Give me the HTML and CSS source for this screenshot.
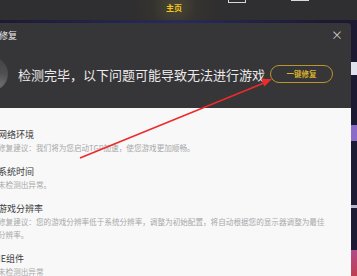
FILE: index.html
```html
<!DOCTYPE html>
<html lang="zh-CN">
<head>
    <meta charset="UTF-8">
    <title>一键修复</title>
    <link rel="stylesheet" href="styles.css">
</head>
<body>
    <div id="page">
        <div class="topbar">
            <span class="nav-home">主页</span>
            <span class="win-box box1"></span>
            <span class="win-box box2"></span>
        </div>
        <div class="stage">
            <div class="dialog">
                <div class="dlg-head">
                    <span class="dlg-title">一键修复</span>
                    <span class="dlg-close">&times;</span>
                </div>
                <div class="summary">
                    <span class="sum-icon"></span>
                    <span class="sum-text">检测完毕，以下问题可能导致无法进行游戏</span>
                    <span class="fix-btn">一键修复</span>
                </div>
                <ul class="result-list">
                    <li>
                        <h3>网络环境</h3>
                        <p>修复建议：我们将为您启动TGP加速，使您游戏更加顺畅。</p>
                    </li>
                    <li>
                        <h3>系统时间</h3>
                        <p>未检测出异常。</p>
                    </li>
                    <li>
                        <h3>游戏分辨率</h3>
                        <p>修复建议：您的游戏分辨率低于系统分辨率，调整为初始配置，将自动根据您的显示器调整为最佳分辨率。</p>
                    </li>
                    <li>
                        <h3>IE组件</h3>
                        <p>未检测出异常</p>
                    </li>
                </ul>
            </div>
            <div class="side">
                <span class="side-a"></span>
                <span class="side-b"></span>
                <span class="side-c"></span>
                <span class="side-d"></span>
            </div>
        </div>
        <!-- 标注箭头 -->
        <svg class="arrow" width="357" height="276" viewBox="0 0 357 276">
            <line x1="80" y1="158" x2="264" y2="83" stroke="#ec2b2b" stroke-width="1.6"/>
            <polygon points="272,79 264.3,86.5 261.2,79.1" fill="#ec2b2b"/>
        </svg>
    </div>
</body>
</html>
```

FILE: styles.css
```css
*{
    margin:0;
    padding:0;
}
li{
    list-style: none;
}
body{
    background: #2f2e30;
    font-family: "Noto Sans CJK SC", "Noto Sans", sans-serif;
}
#page{
    position: relative;
    width: 357px;
    height: 276px;
    overflow: hidden;
    background: #2f2e30;
}
.topbar{
    height: 20px;
    display: flex;
    align-items: flex-start;
    background: radial-gradient(circle at 175px 6px, #4a4634 0, #35332f 22px, #2f2e30 45px);
}
.nav-home{
    margin-left: 166px;
    margin-top: 3px;
    font-size: 8px;
    line-height: 10px;
    font-weight: bold;
    color: #f2c51a;
}
.win-box{
    display: block;
    height: 2px;
    border: 1px solid #d8d8d8;
    border-top: none;
}
.box1{
    width: 16px;
    margin-left: 46px;
}
.box2{
    width: 16px;
    height: 0;
    margin-left: 45px;
}
.stage{
    display: flex;
    height: 256px;
    padding-top: 3px;
    background: linear-gradient(90deg, #1c1a33, #2a2a5a 50%, #1c1a33 90%);
}
.dialog{
    width: 351px;
    background: #363537;
    border-radius: 0 4px 0 0;
    display: flex;
    flex-direction: column;
    overflow: hidden;
}
.dlg-head{
    height: 24px;
    flex-shrink: 0;
    display: flex;
    align-items: center;
    justify-content: space-between;
    padding-right: 8px;
}
.dlg-title{
    margin-left: -19px;
    font-size: 9px;
    color: #e8e8e8;
}
.dlg-close{
    font-size: 12px;
    line-height: 12px;
    color: #c8c8c8;
}
.summary{
    height: 61px;
    flex-shrink: 0;
    padding-bottom: 7px;
    box-sizing: border-box;
    display: flex;
    align-items: center;
}
.sum-icon{
    width: 34px;
    height: 34px;
    margin-left: -26px;
    border-radius: 50%;
    background: radial-gradient(circle at 80% 80%, #6a696c 0, #4e4d50 30%, #444346 70%);
}
.sum-text{
    margin-left: 10px;
    font-size: 13px;
    color: #eaeaea;
    white-space: nowrap;
}
.fix-btn{
    margin-left: 5px;
    width: 61px;
    height: 16px;
    line-height: 16px;
    border: 1px solid #b8962c;
    border-radius: 9px;
    text-align: center;
    font-size: 7.5px;
    font-weight: bold;
    color: #d9b22e;
}
.result-list{
    flex: 1;
    min-height: 0;
    overflow: hidden;
    background: #f8f8f8;
    padding: 21px 20px 0 0;
    margin-left: -2px;
}
.result-list li{
    margin-bottom: 12px;
}
.result-list h3{
    font-size: 9px;
    line-height: 12px;
    font-weight: normal;
    color: #3a3a3a;
}
.result-list p{
    font-size: 7.6px;
    line-height: 13px;
    color: #a8a8a8;
}
.side{
    flex: 1;
    display: flex;
    flex-direction: column;
}
.side-a{
    height: 13px;
    margin-top: 39px;
    background: #dfe3ee;
}
.side-b{
    height: 16px;
    margin-top: 50px;
    background: #8a6cc8;
}
.side-c{
    height: 3px;
    margin-top: 64px;
    background: #b9b6cc;
}
.side-d{
    flex: 1;
    margin-top: 42px;
    background: linear-gradient(#b04c8a, #c23a4a);
}
.arrow{
    position: absolute;
    left: 0;
    top: 0;
    pointer-events: none;
}
```
